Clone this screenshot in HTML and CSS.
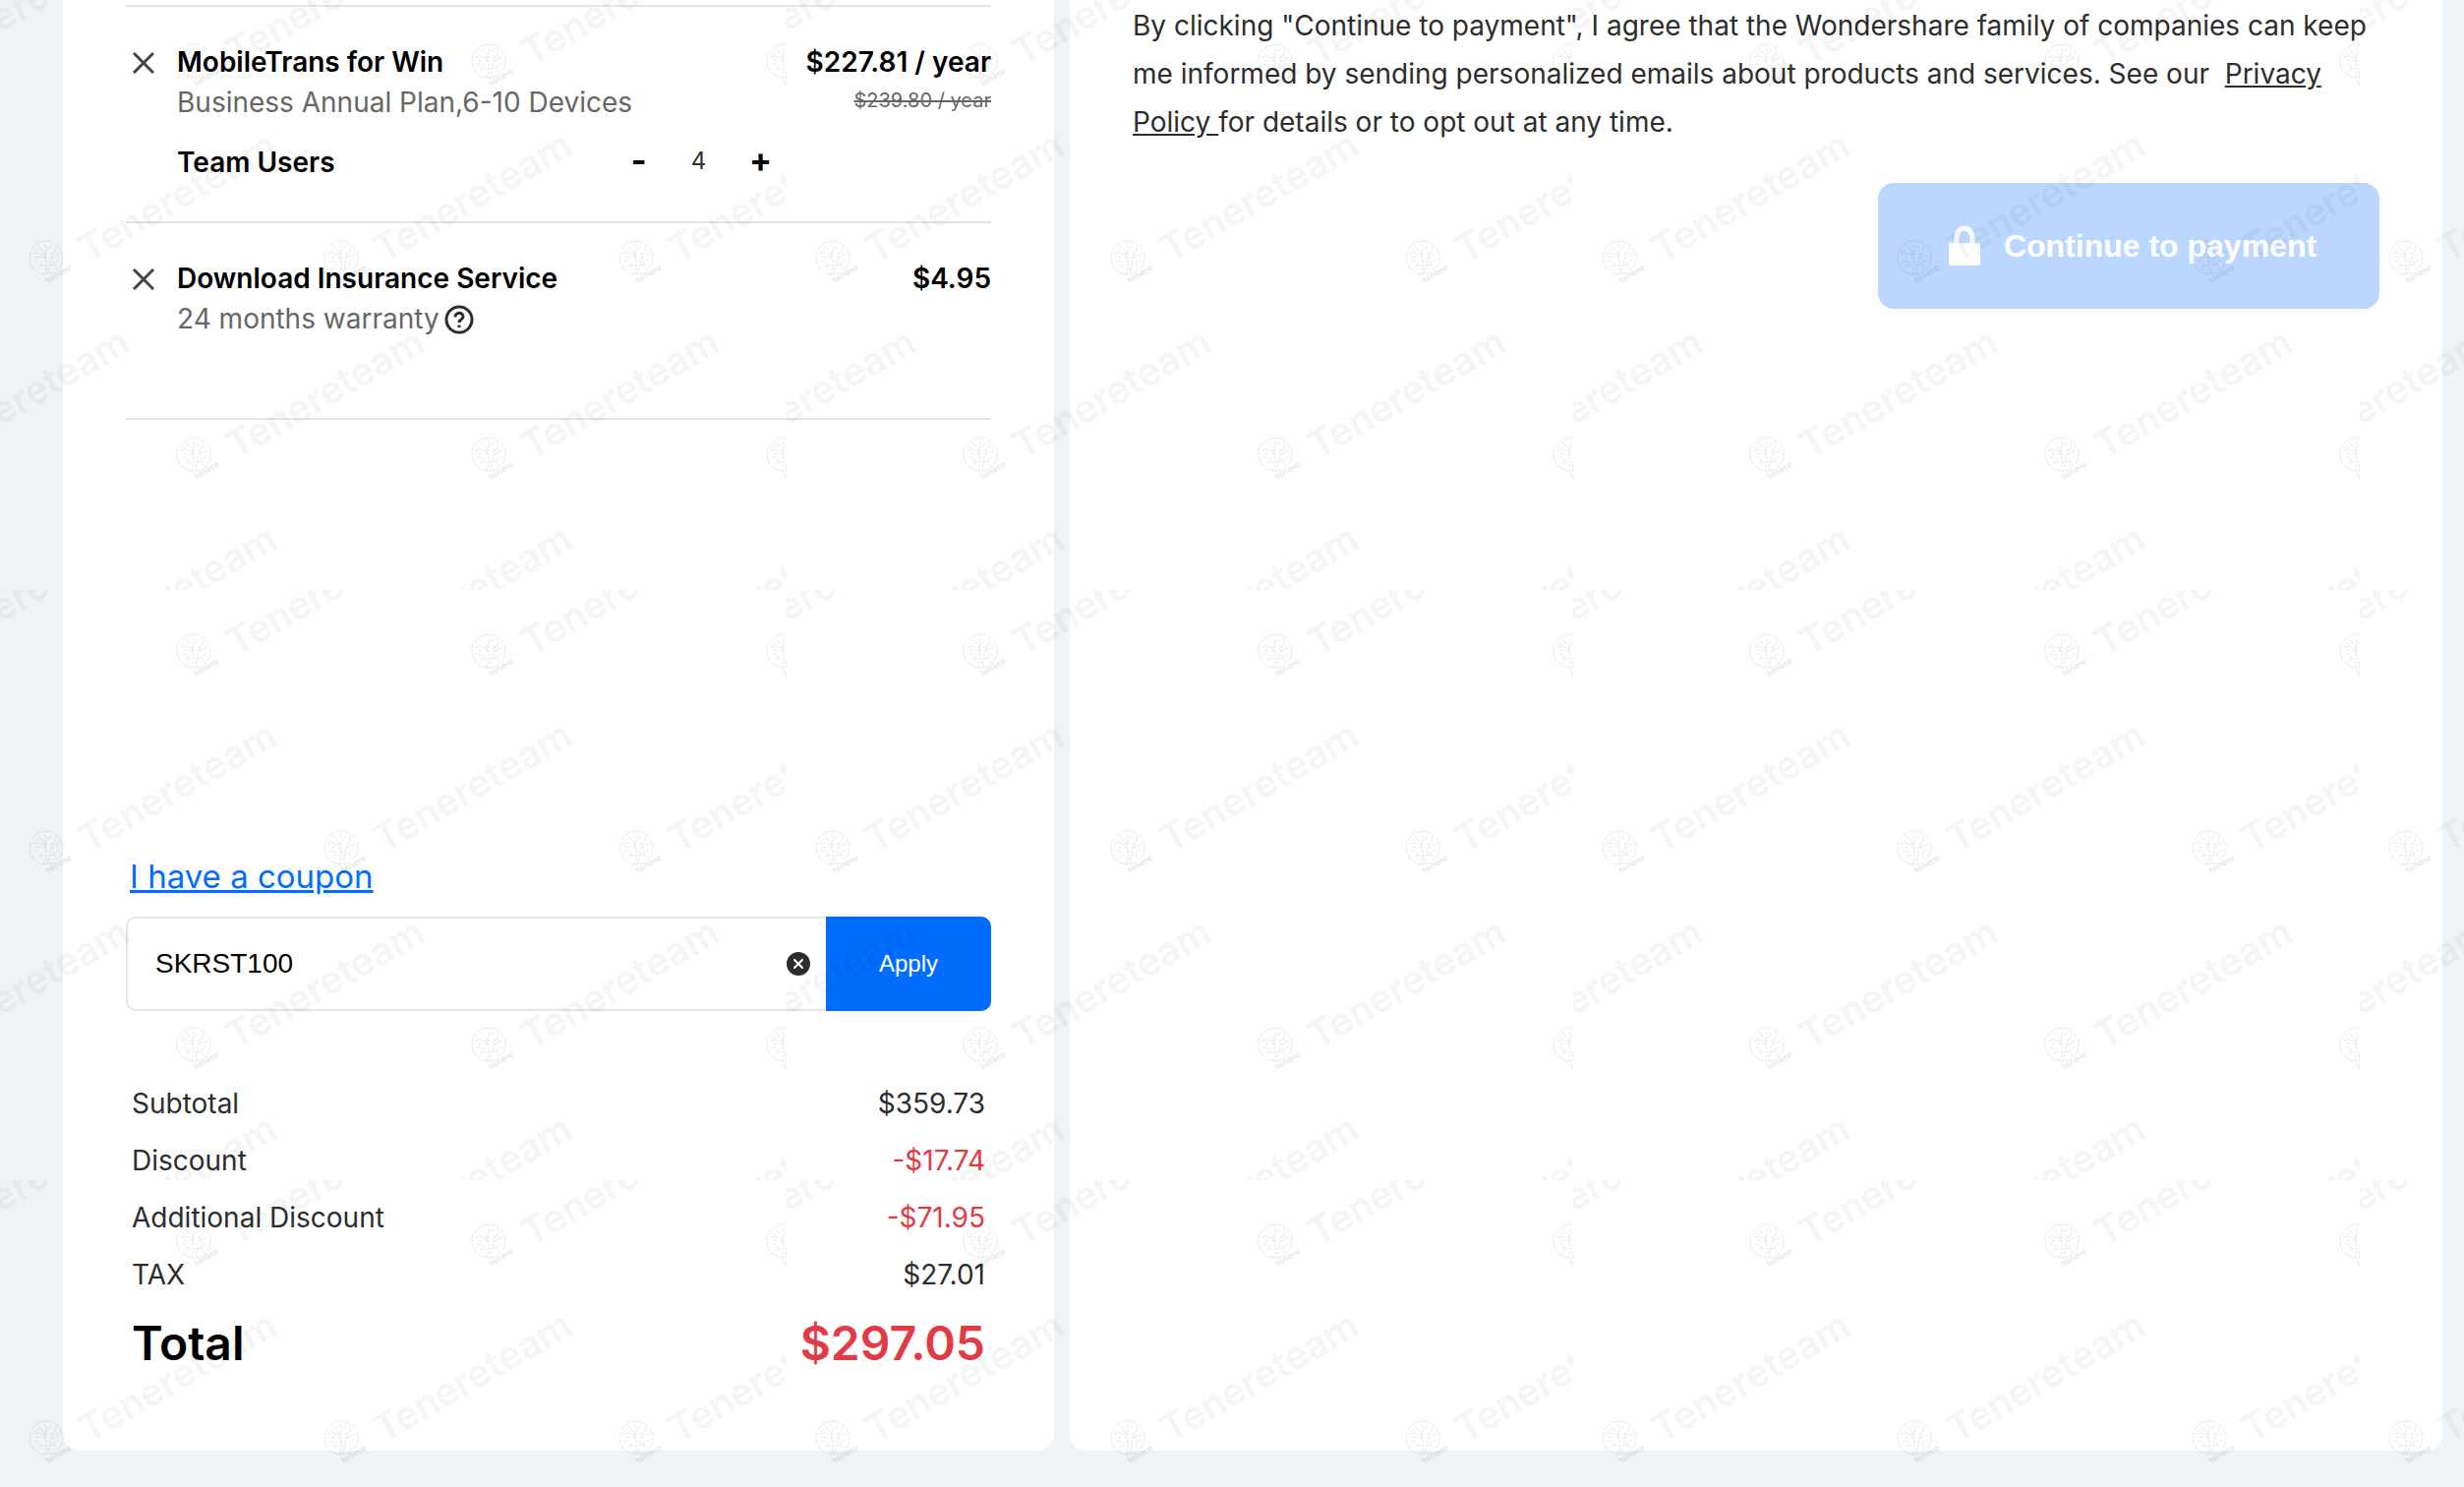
FILE: index.html
```html
<!DOCTYPE html>
<html lang="en">
<head>
  <meta charset="UTF-8">
  <meta name="viewport" content="width=device-width, initial-scale=1.0">
  <title>Checkout</title>
  <link rel="stylesheet" href="styles.css">
</head>
<body>
  <main class="checkout">
      <section class="panel cart">
          <div class="cart-item">
              <button class="remove" aria-label="Remove MobileTrans for Win">
                  <svg viewBox="0 0 22 22"><path d="M1 1L21 21M21 1L1 21"/></svg>
              </button>
              <div class="item-info">
                  <h3>MobileTrans for Win</h3>
                  <p>Business Annual Plan,6-10 Devices</p>
                  <div class="team">
                      <label for="teamUsers">Team Users</label>
                      <div class="stepper">
                          <button aria-label="Fewer users">-</button>
                          <input type="text" id="teamUsers" value="4">
                          <button aria-label="More users">+</button>
                      </div>
                  </div>
              </div>
              <div class="item-price">
                  <strong>$227.81 / year</strong>
                  <del>$239.80 / year</del>
              </div>
          </div>

          <div class="cart-item">
              <button class="remove" aria-label="Remove Download Insurance Service">
                  <svg viewBox="0 0 22 22"><path d="M1 1L21 21M21 1L1 21"/></svg>
              </button>
              <div class="item-info">
                  <h3>Download Insurance Service</h3>
                  <p>24 months warranty
                      <svg class="help" viewBox="0 0 30 30">
                          <circle cx="15" cy="15" r="13"/>
                          <path d="M11 12.5C11 7 19 7 19 12C19 15 15 14.5 15 18"/>
                          <path d="M15 20.5V23"/>
                      </svg>
                  </p>
              </div>
              <div class="item-price">
                  <strong>$4.95</strong>
              </div>
          </div>

          <div class="summary">
              <a href="#coupon" class="coupon-link">I have a coupon</a>
              <form class="coupon">
                  <div class="coupon-field">
                      <input type="text" id="coupon" aria-label="Coupon code" value="SKRST100">
                      <button type="button" class="clear" aria-label="Clear coupon">
                          <svg viewBox="0 0 24 24"><circle cx="12" cy="12" r="12"/><path d="M8 8L16 16M16 8L8 16"/></svg>
                      </button>
                  </div>
                  <button type="button" class="apply">Apply</button>
              </form>

              <table class="totals">
                  <tr><th>Subtotal</th><td>$359.73</td></tr>
                  <tr><th>Discount</th><td class="red">-$17.74</td></tr>
                  <tr><th>Additional Discount</th><td class="red">-$71.95</td></tr>
                  <tr><th>TAX</th><td>$27.01</td></tr>
                  <tr class="total"><th>Total</th><td class="red">$297.05</td></tr>
              </table>
          </div>
      </section>

      <section class="panel payment">
          <p>By clicking "Continue to payment", I agree that the Wondershare family of companies can keep me informed by sending personalized emails about products and services. See our &nbsp;<a href="#privacy">Privacy Policy </a>for details or to opt out at any time.</p>
          <button class="continue">
              <svg viewBox="0 0 32 40"><path d="M8 19V12C8 -1 24 -1 24 12V19"/><rect y="17" width="32" height="23" rx="2"/></svg>
              Continue to payment
          </button>
      </section>
  </main>

  <svg class="watermark" aria-hidden="true">
      <defs>
          <g id="mark">
              <g class="tree">
                  <circle r="17"/>
                  <path d="M-2 17C2 9 0 2-2-4M2 17C3 8 5 2 6-5M-3 9C-6 4-9 3-12 3M5 8C7 4 10 3 13 3M-1 1C-4-4-8-5-11-5M-2-4C-3-8-6-10-8-12M-1-2C1-7 0-10-1-14M6-3C9-6 10-9 9-12M6 0C9-2 12-3 14-4M-10-1L-6 0M-6 7L-8 11M8 6L10 11M3-9L5-13M-13-3L-10-8"/>
              </g>
              <text class="mark-small" transform="translate(2 26) rotate(-30)">tenere</text>
              <text class="mark-text" transform="translate(43 6) rotate(-30)">Tenereteam</text>
          </g>
          <pattern id="tile" width="800" height="600" patternUnits="userSpaceOnUse">
              <use href="#mark" x="-103" y="62"/>
              <use href="#mark" x="197" y="62"/>
              <use href="#mark" x="497" y="62"/>
              <use href="#mark" x="797" y="62"/>
              <use href="#mark" x="47" y="262"/>
              <use href="#mark" x="347" y="262"/>
              <use href="#mark" x="647" y="262"/>
              <use href="#mark" x="-103" y="462"/>
              <use href="#mark" x="197" y="462"/>
              <use href="#mark" x="497" y="462"/>
              <use href="#mark" x="797" y="462"/>
              <use href="#mark" x="47" y="662"/>
              <use href="#mark" x="347" y="662"/>
              <use href="#mark" x="647" y="662"/>
          </pattern>
      </defs>
      <rect width="100%" height="100%" fill="url(#tile)"/>
  </svg>
</body>
</html>
```

FILE: styles.css
```css
* {
    box-sizing: border-box;
}

body {
    margin: 0;
    background-color: #eff3f7;
    font-family: Inter, sans-serif;
    font-size: 28px;
    color: #2d2d2d;
}

h3, p {
    margin: 0;
}

button {
    border: none;
    padding: 0;
    background: none;
    font-family: inherit;
    cursor: pointer;
}

svg {
    fill: none;
}

.checkout {
    display: grid;
    grid-template-columns: 1008fr 1396fr;
    gap: 16px;
    min-height: 100vh;
    padding: 0 22px 37px 64px;
}

.panel {
    background: #fff;
    border-radius: 0 0 16px 16px;
}

.cart {
    display: flex;
    flex-direction: column;
    padding: 5px 64px 68px;
}

.cart-item {
    display: flex;
    border-top: 2px solid #e5e5e5;
    padding: 36px 0 39px;
}

.cart-item + .cart-item {
    padding-bottom: 80px;
    border-bottom: 2px solid #e5e5e5;
}

.remove {
    width: 52px;
    height: 41px;
    padding-left: 7px;
    text-align: left;
}

.remove svg {
    display: block;
    width: 22px;
    height: 22px;
    stroke: #444;
    stroke-width: 3;
}

.item-info {
    flex: 1;
    line-height: 41px;
}

.item-info h3 {
    font-size: 28px;
    font-weight: 600;
    color: #000;
}

.item-info p {
    display: flex;
    align-items: center;
    gap: 5px;
    color: #666;
}

.help {
    width: 30px;
    height: 30px;
    stroke: #2d2d2d;
    stroke-width: 3;
}

.team {
    display: flex;
    justify-content: space-between;
    margin-top: 20px;
}

.team label {
    font-weight: 600;
    color: #000;
}

.stepper {
    display: flex;
    align-items: center;
    height: 36px;
    margin-right: 24px;
}

.stepper button {
    width: 44px;
    font-size: 34px;
    font-weight: 700;
    line-height: 36px;
    color: #000;
}

.stepper input {
    width: 80px;
    border: none;
    padding: 0 2px 0 0;
    background: none;
    text-align: center;
    font-family: inherit;
    font-size: 24px;
    color: #2d2d2d;
}

.item-price {
    display: flex;
    flex-direction: column;
    text-align: right;
    line-height: 41px;
}

.item-price strong {
    font-weight: 600;
    color: #000;
}

.item-price del {
    font-size: 20px;
    line-height: 36px;
    color: #666;
}

.summary {
    margin-top: auto;
}

.coupon-link {
    display: block;
    width: max-content;
    margin: 0 4px 20px;
    font-size: 33px;
    line-height: 42px;
    color: #006dff;
}

.coupon {
    display: flex;
    height: 96px;
}

.coupon-field {
    flex: 1;
    display: flex;
    align-items: center;
    border: 2px solid #e5e5e5;
    border-right: none;
    border-radius: 10px 0 0 10px;
    padding: 0 16px 0 28px;
}

.coupon-field input {
    flex: 1;
    border: none;
    padding: 0;
    font-family: "Liberation Sans", Arial, sans-serif;
    font-size: 28px;
    color: #000;
}

.clear svg {
    display: block;
    width: 24px;
    height: 24px;
    stroke: #fff;
    stroke-width: 2;
    stroke-linecap: round;
}

.clear circle {
    fill: #2d2d2d;
    stroke: none;
}

.apply {
    width: 168px;
    border-radius: 0 10px 10px 0;
    background: #006dff;
    font-family: "Liberation Sans", Arial, sans-serif;
    font-size: 24px;
    color: #fff;
}

.totals {
    width: 100%;
    margin-top: 65px;
    border-collapse: collapse;
    line-height: 58px;
}

.totals th {
    padding: 0 0 0 6px;
    font-weight: 400;
    text-align: left;
}

.totals td {
    padding: 0 6px 0 0;
    text-align: right;
}

.totals .red {
    color: #e33b45;
}

.totals .total {
    font-size: 48px;
    line-height: 82px;
}

.total th {
    color: #000;
}

.total th, .total td {
    font-weight: 600;
}

.payment {
    padding: 2px 64px;
}

.payment p {
    line-height: 49px;
}

.payment a {
    color: inherit;
}

.continue {
    display: flex;
    align-items: center;
    justify-content: center;
    gap: 24px;
    width: 510px;
    height: 128px;
    margin: 37px 0 0 auto;
    border-radius: 16px;
    padding-left: 8px;
    background: #bbd7ff;
    font-family: "Liberation Sans", Arial, sans-serif;
    font-size: 32px;
    font-weight: 700;
    color: #fff;
}

.continue svg {
    width: 32px;
    height: 40px;
    stroke: #fff;
    stroke-width: 5;
}

.continue rect {
    fill: #fff;
    stroke: none;
}

/* tiled watermark over the whole page */
.watermark {
    position: fixed;
    inset: 0;
    width: 100%;
    height: 100%;
    pointer-events: none;
}

.mark-text, .mark-small {
    font-family: Inter, sans-serif;
    font-size: 39px;
    font-weight: 600;
    fill: #000;
    opacity: 0.04;
}

.mark-small {
    font-size: 9px;
    opacity: 0.1;
}

.tree {
    stroke: #000;
    stroke-width: 1;
    stroke-dasharray: 3 1;
    opacity: 0.1;
}
```
